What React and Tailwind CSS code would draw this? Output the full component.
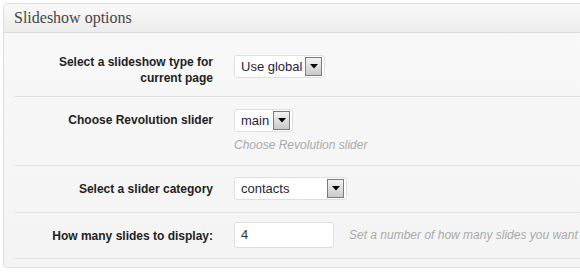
/**
 * SlideshowOptions - painel de opções de slideshow
 */

function SelectBox({ value, width }) {
  return (
    <div
      className="flex items-center justify-between h-[23px] bg-white border border-[#dfdfdf] rounded-[3px] pl-[6px] pr-[2px]"
      style={{ width }}
    >
      <span className="text-[13px] leading-none text-[#2a2438]">{value}</span>
      <span className="flex items-center justify-center w-[17px] h-[19px] border border-[#7a7a7a] bg-gradient-to-b from-[#f4f4f4] to-[#c9c9c9]">
        <svg width="8" height="5" viewBox="0 0 8 5">
          <path d="M0 0 L8 0 L4 4.5 Z" fill="#000" />
        </svg>
      </span>
    </div>
  );
}

function Row({ label, labelPad, rowPad, children, first }) {
  return (
    <div className={`flex items-start ml-[11px] ${rowPad} ${first ? '' : 'border-t border-[#e2e2e2]'}`}>
      <div className="w-[208px] h-[23px] shrink-0 text-right pr-[10px]">
        <div className={`text-[12px] leading-[16px] font-bold text-[#222] ${labelPad}`}>{label}</div>
      </div>
      <div className="pl-[11px]">{children}</div>
    </div>
  );
}

export default function App() {
  return (
    <div className="w-[580px] h-[272px] overflow-hidden bg-white pt-[3px] pl-[3px] font-['Liberation_Sans',Arial,sans-serif]">
      <div className="w-[620px] h-[265px] border border-[#dfdfdf] rounded-[4px] bg-gradient-to-b from-[#f9f9f9] to-[#f4f4f4] overflow-hidden">
        {/* Cabeçalho */}
        <div className="h-[29px] border-b border-[#dcdcdc] bg-gradient-to-b from-[#f9f9f9] to-[#ececec] flex items-center pl-[10px]">
          <h3 className="font-['Liberation_Serif','Times_New_Roman',serif] text-[16px] leading-none text-[#464646]">
            Slideshow options
          </h3>
        </div>

        {/* Linhas */}
        <div className="border-b border-[#e2e2e2] ml-[11px]">
          <div className="-ml-[11px]">
            <Row first label={<>Select a slideshow type for<br />current page</>} rowPad="pt-[22px] pb-[18px]" labelPad="-mt-[1px]">
              <SelectBox value="Use global" width={91} />
            </Row>
            <Row label="Choose Revolution slider" rowPad="pt-[12px] pb-[12px]" labelPad="pt-[3px]">
              <SelectBox value="main" width={59} />
              <div className="mt-[6px] text-[12px] leading-[15px] italic text-[#aaaaaa]">Choose Revolution slider</div>
            </Row>
            <Row label="Select a slider category" rowPad="pt-[11px] pb-[12px]" labelPad="pt-[4px]">
              <SelectBox value="contacts" width={113} />
            </Row>
            <Row label="How many slides to display:" rowPad="pt-[9px] pb-[10px]" labelPad="pt-[6px]">
              <div className="flex items-center">
                <div className="w-[100px] h-[26px] bg-white border border-[#dfdfdf] rounded-[3px] flex items-center pl-[6px] text-[13px] text-[#333]">
                  4
                </div>
                <span className="ml-[15px] text-[12px] italic text-[#aaaaaa] whitespace-nowrap">
                  Set a number of how many slides you want to display
                </span>
              </div>
            </Row>
          </div>
        </div>
      </div>
    </div>
  );
}
